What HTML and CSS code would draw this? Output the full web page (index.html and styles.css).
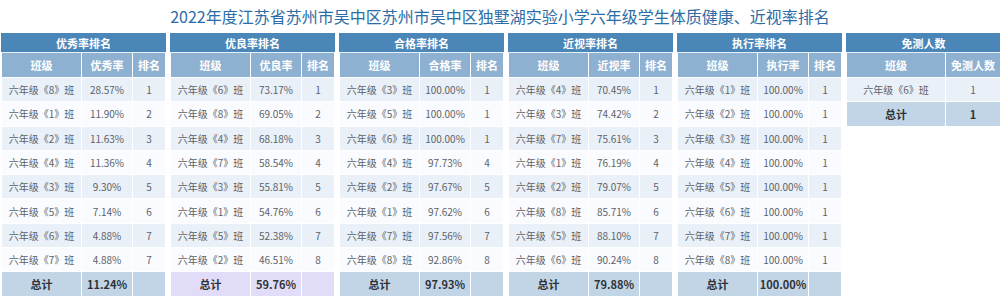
FILE: index.html
```html
<!DOCTYPE html>
<html lang="zh">
<head>
<meta charset="utf-8">
<link rel="stylesheet" href="styles.css">
</head>
<body>
<h1 class="title">2022年度江苏省苏州市吴中区苏州市吴中区独墅湖实验小学六年级学生体质健康、近视率排名</h1>
<div class="boards">
  <table class="rank">
    <colgroup><col class="c1"><col class="c2"><col class="c3"></colgroup>
    <tr class="cap"><th colspan="3">优秀率排名</th></tr>
    <tr class="head"><th>班级</th><th>优秀率</th><th>排名</th></tr>
    <tr class="odd"><td>六年级《8》班</td><td>28.57%</td><td>1</td></tr>
    <tr class="even"><td>六年级《1》班</td><td>11.90%</td><td>2</td></tr>
    <tr class="odd"><td>六年级《2》班</td><td>11.63%</td><td>3</td></tr>
    <tr class="even"><td>六年级《4》班</td><td>11.36%</td><td>4</td></tr>
    <tr class="odd"><td>六年级《3》班</td><td>9.30%</td><td>5</td></tr>
    <tr class="even"><td>六年级《5》班</td><td>7.14%</td><td>6</td></tr>
    <tr class="odd"><td>六年级《6》班</td><td>4.88%</td><td>7</td></tr>
    <tr class="even"><td>六年级《7》班</td><td>4.88%</td><td>7</td></tr>
    <tr class="total"><td>总计</td><td>11.24%</td><td></td></tr>
  </table>
  <table class="rank">
    <colgroup><col class="c1"><col class="c2"><col class="c3"></colgroup>
    <tr class="cap"><th colspan="3">优良率排名</th></tr>
    <tr class="head"><th>班级</th><th>优良率</th><th>排名</th></tr>
    <tr class="odd"><td>六年级《6》班</td><td>73.17%</td><td>1</td></tr>
    <tr class="even"><td>六年级《8》班</td><td>69.05%</td><td>2</td></tr>
    <tr class="odd"><td>六年级《4》班</td><td>68.18%</td><td>3</td></tr>
    <tr class="even"><td>六年级《7》班</td><td>58.54%</td><td>4</td></tr>
    <tr class="odd"><td>六年级《3》班</td><td>55.81%</td><td>5</td></tr>
    <tr class="even"><td>六年级《1》班</td><td>54.76%</td><td>6</td></tr>
    <tr class="odd"><td>六年级《5》班</td><td>52.38%</td><td>7</td></tr>
    <tr class="even"><td>六年级《2》班</td><td>46.51%</td><td>8</td></tr>
    <tr class="total lilac"><td>总计</td><td>59.76%</td><td></td></tr>
  </table>
  <table class="rank">
    <colgroup><col class="c1"><col class="c2"><col class="c3"></colgroup>
    <tr class="cap"><th colspan="3">合格率排名</th></tr>
    <tr class="head"><th>班级</th><th>合格率</th><th>排名</th></tr>
    <tr class="odd"><td>六年级《3》班</td><td>100.00%</td><td>1</td></tr>
    <tr class="even"><td>六年级《5》班</td><td>100.00%</td><td>1</td></tr>
    <tr class="odd"><td>六年级《6》班</td><td>100.00%</td><td>1</td></tr>
    <tr class="even"><td>六年级《4》班</td><td>97.73%</td><td>4</td></tr>
    <tr class="odd"><td>六年级《2》班</td><td>97.67%</td><td>5</td></tr>
    <tr class="even"><td>六年级《1》班</td><td>97.62%</td><td>6</td></tr>
    <tr class="odd"><td>六年级《7》班</td><td>97.56%</td><td>7</td></tr>
    <tr class="even"><td>六年级《8》班</td><td>92.86%</td><td>8</td></tr>
    <tr class="total"><td>总计</td><td>97.93%</td><td></td></tr>
  </table>
  <table class="rank">
    <colgroup><col class="c1"><col class="c2"><col class="c3"></colgroup>
    <tr class="cap"><th colspan="3">近视率排名</th></tr>
    <tr class="head"><th>班级</th><th>近视率</th><th>排名</th></tr>
    <tr class="odd"><td>六年级《4》班</td><td>70.45%</td><td>1</td></tr>
    <tr class="even"><td>六年级《3》班</td><td>74.42%</td><td>2</td></tr>
    <tr class="odd"><td>六年级《7》班</td><td>75.61%</td><td>3</td></tr>
    <tr class="even"><td>六年级《1》班</td><td>76.19%</td><td>4</td></tr>
    <tr class="odd"><td>六年级《2》班</td><td>79.07%</td><td>5</td></tr>
    <tr class="even"><td>六年级《8》班</td><td>85.71%</td><td>6</td></tr>
    <tr class="odd"><td>六年级《5》班</td><td>88.10%</td><td>7</td></tr>
    <tr class="even"><td>六年级《6》班</td><td>90.24%</td><td>8</td></tr>
    <tr class="total"><td>总计</td><td>79.88%</td><td></td></tr>
  </table>
  <table class="rank">
    <colgroup><col class="c1"><col class="c2"><col class="c3"></colgroup>
    <tr class="cap"><th colspan="3">执行率排名</th></tr>
    <tr class="head"><th>班级</th><th>执行率</th><th>排名</th></tr>
    <tr class="odd"><td>六年级《1》班</td><td>100.00%</td><td>1</td></tr>
    <tr class="even"><td>六年级《2》班</td><td>100.00%</td><td>1</td></tr>
    <tr class="odd"><td>六年级《3》班</td><td>100.00%</td><td>1</td></tr>
    <tr class="even"><td>六年级《4》班</td><td>100.00%</td><td>1</td></tr>
    <tr class="odd"><td>六年级《5》班</td><td>100.00%</td><td>1</td></tr>
    <tr class="even"><td>六年级《6》班</td><td>100.00%</td><td>1</td></tr>
    <tr class="odd"><td>六年级《7》班</td><td>100.00%</td><td>1</td></tr>
    <tr class="even"><td>六年级《8》班</td><td>100.00%</td><td>1</td></tr>
    <tr class="total"><td>总计</td><td>100.00%</td><td></td></tr>
  </table>
  <table class="rank exempt">
    <colgroup><col class="e1"><col class="e2"></colgroup>
    <tr class="cap"><th colspan="2">免测人数</th></tr>
    <tr class="head"><th>班级</th><th>免测人数</th></tr>
    <tr class="odd"><td>六年级《6》班</td><td>1</td></tr>
    <tr class="total"><td>总计</td><td>1</td></tr>
  </table>
</div>
</body>
</html>
```

FILE: styles.css
```css
html, body {
  margin: 0;
  padding: 0;
  background: #ffffff;
}
body {
  font-family: "Microsoft YaHei", "Noto Sans CJK SC", "Noto Sans", sans-serif;
  width: 1000px;
  height: 300px;
  overflow: hidden;
}
.title {
  margin: 0;
  height: 33px;
  line-height: 33px;
  font-size: 16px;
  font-weight: normal;
  color: #2d6ca5;
  text-align: center;
}
.boards {
  display: grid;
  grid-template-columns: repeat(5, 164px) 154px;
  column-gap: 5px;
  align-items: start;
  padding-left: 1px;
}
.rank {
  width: 100%;
  border-collapse: collapse;
  table-layout: fixed;
  font-size: 10px;
  text-align: center;
  border: 1px solid #e2e6ea;
}
.rank th,
.rank td {
  padding: 0;
  border: 1px solid #ffffff;
  white-space: nowrap;
  overflow: hidden;
}
.c1 { width: 80px; }
.c2 { width: 51px; }
.c3 { width: 33px; }
.e1 { width: 99px; }
.e2 { width: 55px; }
.cap th {
  height: 18px;
  background: #4a86b7;
  color: #ffffff;
  font-weight: bold;
  font-size: 11px;
  border-color: #4a86b7;
  border-bottom-color: #e6eef6;
}
.head th {
  height: 24px;
  background: #8eb1d1;
  color: #ffffff;
  font-weight: bold;
  font-size: 11px;
}
.rank td {
  height: 23.3px;
  color: #5d6268;
}
.odd td { background: #e9f0f8; }
.even td { background: #f9fbfe; }
.total td {
  height: 24px;
  background: #c2d5e6;
  color: #2f3338;
  font-weight: bold;
  font-size: 11px;
}
.lilac td { background: #e1ddf9; }
```
